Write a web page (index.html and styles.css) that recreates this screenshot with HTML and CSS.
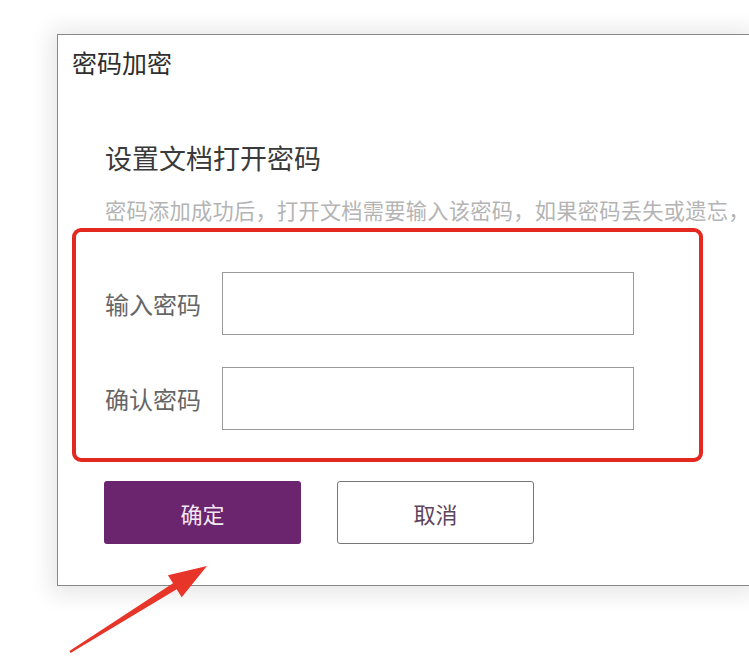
FILE: index.html
```html
<!DOCTYPE html>
<html lang="zh-CN">
<head>
<meta charset="utf-8">
<title>密码加密</title>
<link rel="stylesheet" href="styles.css">
</head>
<body>
<div class="dialog">
  <div class="dialog-title">密码加密</div>
  <div class="dialog-body">
    <div class="heading">设置文档打开密码</div>
    <div class="desc">密码添加成功后，打开文档需要输入该密码，如果密码丢失或遗忘，</div>
    <div class="highlight">
      <div class="field">
        <label class="field-label">输入密码</label>
        <div class="input"></div>
      </div>
      <div class="field">
        <label class="field-label">确认密码</label>
        <div class="input"></div>
      </div>
    </div>
    <div class="actions">
      <div class="btn btn-primary">确定</div>
      <div class="btn btn-default">取消</div>
    </div>
  </div>
</div>
<svg class="arrow" width="749" height="661" viewBox="0 0 749 661" xmlns="http://www.w3.org/2000/svg">
  <polygon fill="#e8352a" points="207,566 181.7,597.2 176.7,589.2 70.6,653 69.4,651 173,583.2 167.9,575.2"/>
</svg>
</body>
</html>
```
FILE: styles.css
```css
html, body {
  margin: 0;
  padding: 0;
}
body {
  width: 749px;
  height: 661px;
  overflow: hidden;
  position: relative;
  background: #ffffff;
  font-family: "Noto Sans CJK SC", "Noto Sans", sans-serif;
}
.dialog {
  margin: 34px 0 0 57px;
  width: 692px;
  box-sizing: border-box;
  background: #fff;
  border: 1px solid #888;
  border-right: none;
  box-shadow: 0 2px 22px 6px rgba(0, 0, 0, 0.1);
  padding-bottom: 41px;
}
.dialog-title {
  padding-left: 14px;
  height: 54px;
  line-height: 54px;
  font-size: 25px;
  color: #2e2e2e;
}
.dialog-body {
  padding-left: 47px;
}
.heading {
  margin-top: 49px;
  height: 40px;
  line-height: 40px;
  font-size: 27px;
  color: #3a3a3a;
}
.desc {
  margin-top: 17px;
  height: 30px;
  line-height: 30px;
  font-size: 21.2px;
  letter-spacing: 0.3px;
  color: #b4b4b4;
  white-space: nowrap;
  width: fit-content;
}
.highlight {
  margin: 3px 0 0 -33px;
  width: 631px;
  height: 234px;
  box-sizing: border-box;
  border: 4px solid #e3281f;
  border-radius: 9px;
  padding: 40px 0 28px 29px;
  display: flex;
  flex-direction: column;
  gap: 32px;
}
.field {
  display: flex;
  align-items: center;
  height: 63px;
}
.field-label {
  width: 117px;
  font-size: 24px;
  color: #666;
}
.input {
  width: 412px;
  height: 63px;
  box-sizing: border-box;
  border: 1px solid #999;
  background: #fff;
}
.actions {
  margin: 19px 0 0 -1px;
  display: flex;
  gap: 36px;
}
.btn {
  width: 197px;
  height: 63px;
  box-sizing: border-box;
  border-radius: 3px;
  display: flex;
  align-items: center;
  justify-content: center;
  font-size: 22px;
}
.btn-primary {
  background: #6b246e;
  color: #f3e9f3;
}
.btn-default {
  background: #fff;
  border: 1px solid #777;
  color: #5e4560;
}
.arrow {
  position: absolute;
  left: 0;
  top: 0;
}
```
